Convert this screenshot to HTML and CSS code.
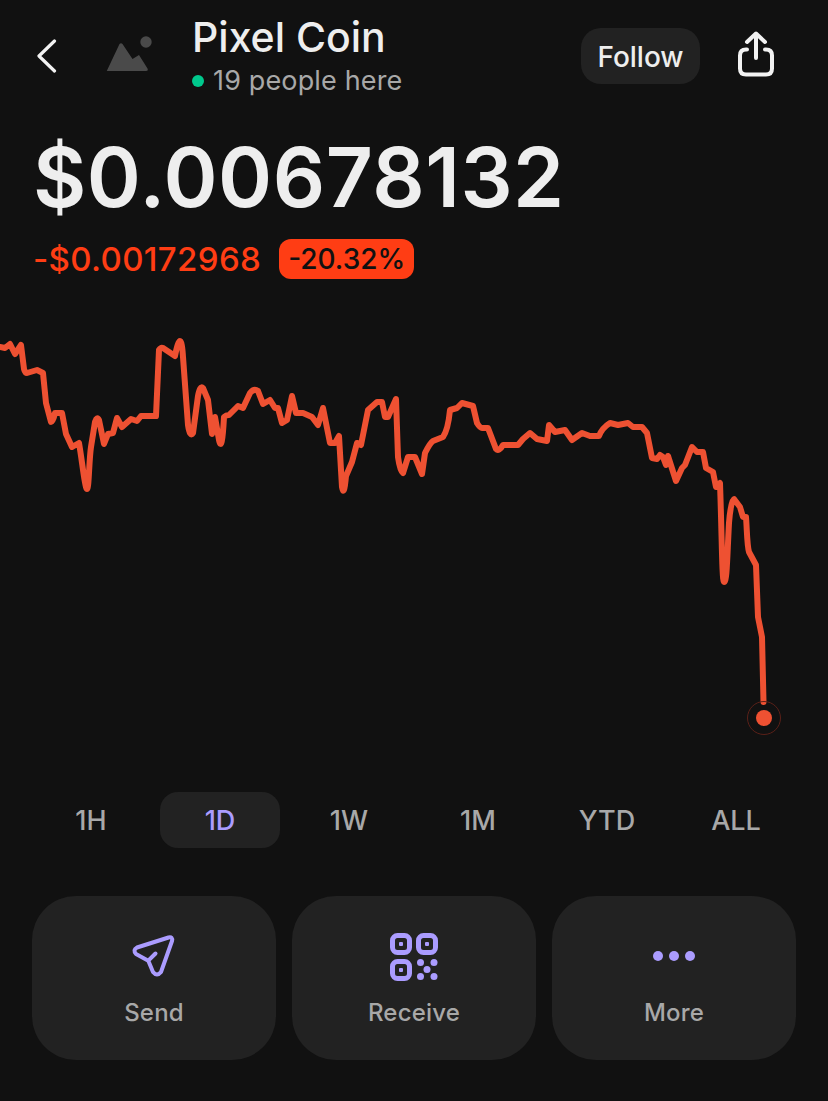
FILE: index.html

```html
<!DOCTYPE html>
<html>
<head>
    <title>Pixel Coin</title>
    <link rel="stylesheet" href="styles.css">
</head>
<body>
    <div class="header">
        <svg class="back-icon" width="20" height="34" viewBox="0 0 20 34">
            <path d="M17.5 2 L2 17 L17.5 32"/>
        </svg>
        <svg class="coin-icon" width="48" height="38" viewBox="0 0 48 38">
            <path d="M2 35.5 L14.5 9 Q16 7.5 17.5 9 L27.5 24 L34 20 L42.5 33.5 Q43.500 36 41 36 L3 36 Q1 36 2 35.500Z"/>
            <circle cx="41" cy="7" r="5.700"/>
        </svg>
        <div class="title-block">
            <div class="title">Pixel Coin</div>
            <div class="people"><span class="online-dot"></span>19 people here</div>
        </div>
        <button class="follow-button">Follow</button>
        <svg class="share-icon" width="38" height="46" viewBox="0 0 38 46">
            <path d="M10 18.500 L9 18.500 Q3 18.500 3 24.500 L3 37.500 Q3 43.500 9 43.500 L29 43.500 Q35 43.500 35 37.500 L35 24.500 Q35 18.500 29 18.500 L28 18.500"/>
            <path d="M19 27 L19 3 M10 11 L19 2.500 L28 11"/>
        </svg>
    </div>

    <div class="price">$0.00678132</div>
    <div class="change">
        <span class="change-value">-$0.00172968</span>
        <span class="change-badge">-20.32%</span>
    </div>

    <svg class="chart" width="828" height="420" viewBox="0 330 828 420">
        <path class="chart-line" d="M0 347 L5 348 L10 344 L15 354 L21 345 L24 369 Q25 373 27 373 L37 370 L43 373 L46 403 L51 422 Q53 422 55 413 L62 413 L66 434 L72 447 L79 443 C82 460 85 489 87 489 C89 489 89 460 91 447 L95 422 Q97 416 99 420 L104 444 L108 434 L113 433 L117 418 L122 427 L131 419 L137 421 L141 416 L156 416 L159 350 Q161 347 163 348 L175 356 Q178 341 180 341 Q182 341 183 357 L188 425 Q190 438 193 433 L198 396 Q200 385 203 388 L208 400 L212 434 L215 417 L219 440 Q222 454 224 417 Q226 415 229 415 L238 406 L243 408 L250 393 Q254 388 258 391 L263 404 L270 400 L275 408 L278 408 L282 423 L287 420 L292 396 L296 413 L303 413 L312 417 L318 425 L323 408 L330 443 L335 443 L339 436 L342 487 Q344 498 346 476 L352 462 L357 443 L361 445 L368 410 L377 402 L382 402 L385 417 L388 417 L396 399 L398 457 Q400 471 403 473 L408 457 L415 457 L422 474 L425 453 Q430 443 433 441 L443 437 Q448 430 450 410 L457 408 L462 403 L473 406 L477 423 Q480 428 482 428 L488 428 L496 449 Q499 452 503 445 L518 445 L523 439 L530 433 L537 439 L547 441 L549 425 L555 432 L565 430 L572 440 L582 433 L590 436 L599 436 Q602 428 610 423 L618 425 L628 423 L633 427 L642 427 L647 433 L652 458 L657 459 L660 455 L663 457 L666 465 L668 456 L676 481 L682 468 L685 465 L692 447 L697 452 L703 452 L706 468 L713 472 L716 487 L720 483 C722 540 722 582 724 582 C727 582 727 560 729 523 C730 510 732 499 734 499 L740 507 L743 517 L746 517 C747 530 747 545 749 552 L756 565 L758 617 L762 637 L763.500 702"/>
        <circle class="chart-ring" cx="764" cy="718" r="16.500"/>
        <circle class="chart-dot" cx="764" cy="718" r="8"/>
    </svg>

    <div class="ranges">
        <div class="range">1H</div>
        <div class="range active">1D</div>
        <div class="range">1W</div>
        <div class="range">1M</div>
        <div class="range">YTD</div>
        <div class="range">ALL</div>
    </div>

    <div class="actions">
        <div class="action">
            <svg class="action-icon" width="48" height="48" viewBox="0 0 48 48">
                <path d="M38.500 4.500 L7 14.500 Q2.500 17 6 21 L18.300 27.700 L23 39 Q27 44 31 39 L42 8 Q43 3.500 38.500 4.500Z M18.300 27.700 L25.500 20.500"/>
            </svg>
            <span>Send</span>
        </div>
        <div class="action">
            <svg class="action-icon qr" width="48" height="48" viewBox="0 0 48 48">
                <rect class="qr-frame" x="2.500" y="2.500" width="17" height="17" rx="5"/>
                <rect class="qr-frame" x="28.500" y="2.500" width="17" height="17" rx="5"/>
                <rect class="qr-frame" x="2.500" y="28.500" width="17" height="17" rx="5"/>
                <rect x="9" y="9" width="4" height="4" rx="1"/>
                <rect x="35" y="9" width="4" height="4" rx="1"/>
                <rect x="9" y="35" width="4" height="4" rx="1"/>
                <circle cx="30.500" cy="29.500" r="3.500"/>
                <circle cx="44" cy="29.500" r="3.500"/>
                <circle cx="37" cy="36.500" r="3.500"/>
                <circle cx="30.500" cy="43.500" r="3.500"/>
                <circle cx="44" cy="43.500" r="3.500"/>
            </svg>
            <span>Receive</span>
        </div>
        <div class="action">
            <svg class="action-icon dots" width="48" height="48" viewBox="0 0 48 48">
                <circle cx="8" cy="23" r="5"/>
                <circle cx="24" cy="23" r="5"/>
                <circle cx="40" cy="23" r="5"/>
            </svg>
            <span>More</span>
        </div>
    </div>
</body>
</html>
```

FILE: styles.css

```css
body {
    margin: 0;
    background-color: #111111;
    color: #eeeeee;
    font-family: Inter, "Liberation Sans", sans-serif;
    height: 1101px;
    overflow: hidden;
}
.header {
    display: flex;
    align-items: center;
    height: 112px;
    padding: 0 53px 0 37px;
}
.back-icon { fill: none; stroke: #f2f2f2; stroke-width: 3.200; stroke-linecap: round; stroke-linejoin: round; }
.coin-icon { fill: #4a4a4a; margin-left: 48px; margin-bottom: 4px; }
.title-block { margin-left: 39px; flex: 1; }
.title {
    font-size: 41px;
    font-weight: 500;
    line-height: 48px;
    margin-top: -2px;
}
.people {
    display: flex;
    align-items: center;
    font-size: 27px;
    letter-spacing: 0.15px;
    line-height: 34px;
    color: #a8a8a8;
    margin-top: 3px;
}
.online-dot {
    width: 12px;
    height: 12px;
    margin-right: 9px;
    border-radius: 50%;
    background-color: #00c98d;
}
.follow-button {
    width: 119px;
    height: 56px;
    padding: 2px 0 0;
    border: none;
    border-radius: 20px;
    background-color: #222222;
    color: #eeeeee;
    font-family: inherit;
    font-size: 28px;
    font-weight: 500;
}
.share-icon { fill: none; stroke: #f2f2f2; stroke-width: 4; stroke-linecap: round; stroke-linejoin: round; margin-left: 37px; margin-bottom: 4px; }
.price {
    font-size: 82px;
    font-weight: 600;
    letter-spacing: 0.5px;
    line-height: 90px;
    margin: 21px 0 0 33px;
}
.change {
    display: flex;
    align-items: center;
    margin: 16px 0 0 33px;
}
.change-value { font-size: 33px; font-weight: 500; letter-spacing: 0.35px; line-height: 40px; color: #ff3d14; }
.change-badge {
    margin-left: 18px;
    padding: 0 9px;
    border-radius: 12px;
    background-color: #ff3d14;
    color: #111111;
    font-size: 28px;
    font-weight: 500;
    line-height: 40px;
}
.chart { display: block; margin-top: 51px; }
.chart-line { fill: none; stroke: #ee5132; stroke-width: 6; stroke-linecap: round; stroke-linejoin: round; }
.chart-ring { fill: none; stroke: #5a2018; stroke-width: 1; }
.chart-dot { fill: #ee5132; }
.ranges {
    display: grid;
    grid-template-columns: repeat(6, 1fr);
    column-gap: 9px;
    margin: 42px 32px 0 31px;
}
.range {
    height: 56px;
    border-radius: 18px;
    color: #a8a8a8;
    font-size: 27px;
    font-weight: 500;
    line-height: 58px;
    text-align: center;
}
.range.active { background-color: #222222; color: #ab9cff; }
.actions {
    display: flex;
    gap: 16px;
    margin: 48px 32px 0;
}
.action {
    flex: 1;
    height: 164px;
    border-radius: 44px;
    background-color: #222222;
    color: #a8a8a8;
    font-size: 24px;
    font-weight: 500;
    letter-spacing: 0.2px;
    text-align: center;
}
.action-icon { display: block; margin: 37px auto 17px; fill: none; stroke: #ab9cff; stroke-width: 4; stroke-linecap: round; stroke-linejoin: round; }
.qr, .dots { fill: #ab9cff; stroke: none; }
.qr-frame { fill: none; stroke: #ab9cff; stroke-width: 5; }
```
